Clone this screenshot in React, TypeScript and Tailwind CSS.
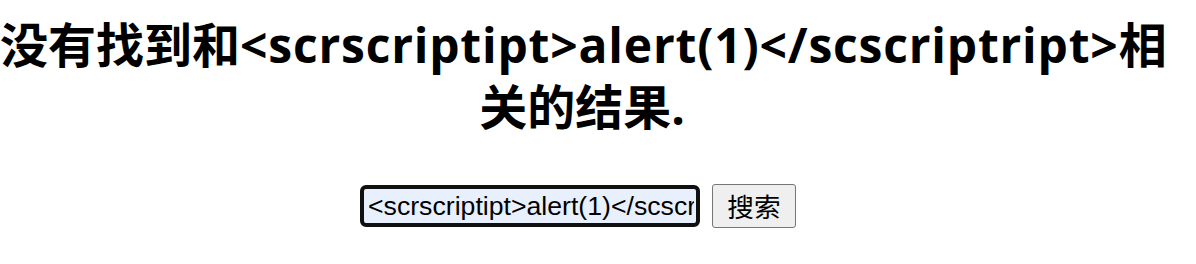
import React from 'react';

const query = '<scrscriptipt>alert(1)</scscriptript>';

const App: React.FC = () => {
  return (
    <div className="w-[1196px] h-[264px] bg-white overflow-hidden">
      <div className="w-[1164px] text-center">
        <h1 className="pt-[14px] text-[48px] leading-[62px] font-bold text-black whitespace-nowrap font-['Open_Sans','Noto_Sans_CJK_SC',sans-serif]">
          没有找到和<span className="tracking-[0.8px]">{query}</span>相
          <br />
          关的结果.
        </h1>

        <form className="mt-[46px] flex justify-center items-center gap-[12px] pr-[8px]" onSubmit={(e) => e.preventDefault()}>
          <input
            type="text"
            defaultValue={query}
            className="w-[340px] h-[42px] pl-[4px] pr-[2px] bg-[#e8f0fe] border-[4px] border-[#101010] rounded-[6px] text-[26.67px] text-black outline-none font-['Liberation_Sans',Arial,sans-serif]"
          />
          <button
            type="submit"
            className="w-[84px] h-[44px] bg-[#efefef] border border-[#767676] rounded-[3px] text-[26.67px] leading-none text-black font-['Noto_Sans_CJK_SC',sans-serif]"
          >
            搜索
          </button>
        </form>
      </div>
    </div>
  );
};

export default App;
